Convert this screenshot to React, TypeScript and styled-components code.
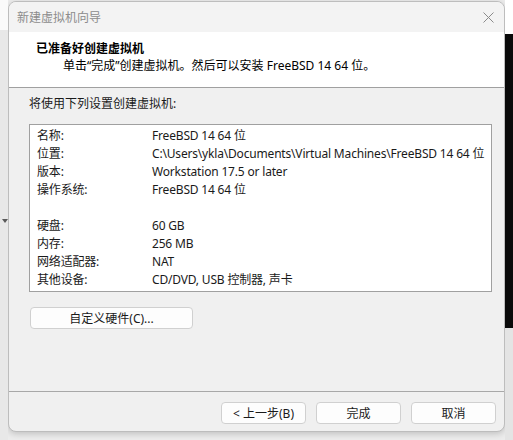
import React from "react";
import styled, { createGlobalStyle } from "styled-components";

const GlobalStyle = createGlobalStyle`
  html, body {
    margin: 0;
    padding: 0;
    background: #ececec;
  }
  body {
    font-family: "Noto Sans", "Noto Sans CJK SC", sans-serif;
    font-size: 12px;
    color: #1a1a1a;
  }
`;

const Desktop = styled.div`
  display: flex;
  width: 513px;
  height: 440px;
  overflow: hidden;
  background: #ececec;
`;

const LeftGutter = styled.div`
  position: relative;
  width: 8px;
  flex-shrink: 0;
  background: linear-gradient(#fafafa 0, #fafafa 30px, #e8e8e8 30px);

  &::after {
    content: '';
    position: absolute;
    top: 219px;
    left: 2px;
    border-left: 3px solid transparent;
    border-right: 3px solid transparent;
    border-top: 4px solid #5a5a5a;
  }
`;

const RightGutter = styled.div`
  display: flex;
  flex-direction: column;
  flex: 1;
`;

const GutterBlock = styled.div<{ $h: number; $bg: string }>`
  height: ${p => p.$h}px;
  background: ${p => p.$bg};
  flex-shrink: 0;
`;

const Dialog = styled.div`
  display: flex;
  flex-direction: column;
  width: 497px;
  height: 431px;
  margin-top: 1px;
  flex-shrink: 0;
  overflow: hidden;
  background: #f0f0f0;
  border: 1px solid #bdbdbd;
  border-radius: 8px;
  box-sizing: border-box;
  box-shadow: 0 2px 6px rgba(0, 0, 0, .18);
`;

const TitleBar = styled.div`
  display: flex;
  align-items: center;
  justify-content: space-between;
  height: 30px;
  padding: 0 10px 0 8px;
  background: #f3f3f3;
  flex-shrink: 0;
`;

const TitleText = styled.span`
  font-size: 12px;
  color: #8c8c8c;
`;

const CloseIcon = styled.svg`
  width: 11px;
  height: 11px;
  stroke: #8a8a8a;
  stroke-width: 1;
`;

const Header = styled.div`
  display: flex;
  flex-direction: column;
  height: 56px;
  padding: 8px 0 0 27px;
  box-sizing: border-box;
  background: #ffffff;
  border-bottom: 1px solid #a0a0a0;
  flex-shrink: 0;
`;

const HeaderTitle = styled.div`
  font-weight: bold;
  font-size: 12px;
  line-height: 17px;
  color: #000;
`;

const HeaderSub = styled.div`
  padding-left: 27px;
  line-height: 17px;
  color: #000;
`;

const Body = styled.div`
  display: flex;
  flex-direction: column;
  flex: 1;
  padding: 7px 12px 0 20px;
`;

const Intro = styled.div`
  line-height: 17px;
  margin-bottom: 12px;
`;

const SummaryBox = styled.div`
  display: grid;
  grid-template-columns: 115px 1fr;
  grid-auto-rows: 18px;
  width: 463px;
  height: 168px;
  box-sizing: border-box;
  padding: 2px 0 0 7px;
  background: #ffffff;
  border: 1px solid #a0a0a0;
`;

const Cell = styled.span`
  line-height: 18px;
  white-space: nowrap;
  letter-spacing: -0.18px;
`;

const Spacer = styled.div`
  grid-column: 1 / span 2;
`;

const Button = styled.button<{ $w: number }>`
  width: ${p => p.$w}px;
  height: 22px;
  padding: 0;
  font-family: inherit;
  font-size: 12px;
  color: #1a1a1a;
  background: #fdfdfd;
  border: 1px solid #d0d0d0;
  border-radius: 4px;
`;

const CustomRow = styled.div`
  display: flex;
  padding: 15px 0 0 1px;
`;

const Footer = styled.div`
  display: flex;
  justify-content: flex-end;
  gap: 10px;
  height: 40px;
  padding: 10px 8px 0 0;
  box-sizing: border-box;
  border-top: 1px solid #a8a8a8;
  flex-shrink: 0;
`;

const rows: Array<[string, string] | null> = [
  ["名称:", "FreeBSD 14 64 位"],
  ["位置:", "C:\\Users\\ykla\\Documents\\Virtual Machines\\FreeBSD 14 64 位"],
  ["版本:", "Workstation 17.5 or later"],
  ["操作系统:", "FreeBSD 14 64 位"],
  null,
  ["硬盘:", "60 GB"],
  ["内存:", "256 MB"],
  ["网络适配器:", "NAT"],
  ["其他设备:", "CD/DVD, USB 控制器, 声卡"],
];

export default function App() {
  return (
    <>
      <GlobalStyle />
      <Desktop>
        <LeftGutter />
        <Dialog>
          <TitleBar>
            <TitleText>新建虚拟机向导</TitleText>
            <CloseIcon viewBox="0 0 11 11">
              <path d="M0.5 0.5 L10.5 10.5 M10.5 0.5 L0.5 10.5" />
            </CloseIcon>
          </TitleBar>
          <Header>
            <HeaderTitle>已准备好创建虚拟机</HeaderTitle>
            <HeaderSub>单击“完成”创建虚拟机。然后可以安装 FreeBSD 14 64 位。</HeaderSub>
          </Header>
          <Body>
            <Intro>将使用下列设置创建虚拟机:</Intro>
            <SummaryBox>
              {rows.map((r, i) =>
                r ? (
                  <React.Fragment key={i}>
                    <Cell>{r[0]}</Cell>
                    <Cell>{r[1]}</Cell>
                  </React.Fragment>
                ) : (
                  <Spacer key={i} />
                )
              )}
            </SummaryBox>
            <CustomRow>
              <Button $w={163}>自定义硬件(C)...</Button>
            </CustomRow>
          </Body>
          <Footer>
            <Button $w={85}>&lt; 上一步(B)</Button>
            <Button $w={85}>完成</Button>
            <Button $w={85}>取消</Button>
          </Footer>
        </Dialog>
        <RightGutter>
          <GutterBlock $h={34} $bg="#ffffff" />
          <GutterBlock $h={294} $bg="#0a0a0a" />
          <GutterBlock $h={112} $bg="#e4e4e4" />
        </RightGutter>
      </Desktop>
    </>
  );
}
